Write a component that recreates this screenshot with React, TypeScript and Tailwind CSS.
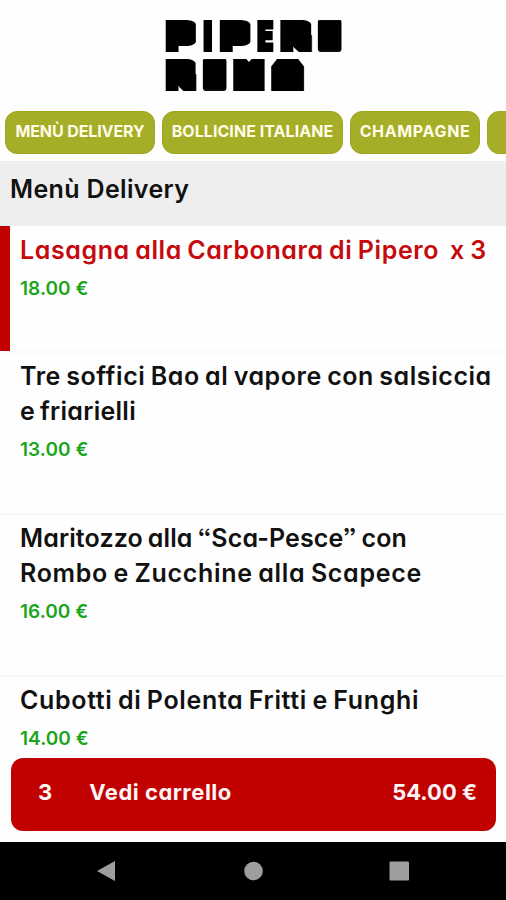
type Dish = {
  lines: { text: string; tracking: string }[];
  price: string;
  quantity?: number;
};

const categories = [
  { label: "MENÙ DELIVERY", style: "w-[150px] tracking-[-0.1px]" },
  { label: "BOLLICINE ITALIANE", style: "w-[181px] tracking-[0.05px]" },
  { label: "CHAMPAGNE", style: "w-[130px] tracking-[0.65px]" },
  { label: "ROSSI", style: "w-[86px]" },
];

const dishes: Dish[] = [
  {
    lines: [{ text: "Lasagna alla Carbonara di Pipero", tracking: "tracking-[0.6px]" }],
    price: "18.00 €",
    quantity: 3,
  },
  {
    lines: [
      { text: "Tre soffici Bao al vapore con salsiccia", tracking: "tracking-[0.56px]" },
      { text: "e friarielli", tracking: "tracking-[0.27px]" },
    ],
    price: "13.00 €",
  },
  {
    lines: [
      { text: "Maritozzo alla “Sca-Pesce” con", tracking: "tracking-[0.12px]" },
      { text: "Rombo e Zucchine alla Scapece", tracking: "tracking-[0.7px]" },
    ],
    price: "16.00 €",
  },
  {
    lines: [{ text: "Cubotti di Polenta Fritti e Funghi", tracking: "tracking-[0.65px]" }],
    price: "14.00 €",
  },
];

const CAP_HEIGHT = 0.727;
const BLOCK_HEIGHT = 32;

// Each letter is thickened by rx/ry until it fills its own block
const logoLetters = [
  { char: "P", x: 0.5, y: 0, width: 32, rx: 4, ry: 8, weight: 500 },
  { char: "I", x: 39, y: 0, width: 9.5, rx: 3, ry: 7, weight: 800 },
  { char: "P", x: 54.5, y: 0, width: 32.5, rx: 4, ry: 8, weight: 500 },
  { char: "E", x: 93, y: 0, width: 16.5, rx: 2, ry: 2, weight: 800 },
  { char: "R", x: 115, y: 0, width: 33, rx: 4, ry: 8, weight: 500 },
  { char: "O", x: 154, y: 0, width: 23.5, rx: 9, ry: 13, weight: 800 },
  { char: "R", x: 0.5, y: 39, width: 32, rx: 4, ry: 8, weight: 500 },
  { char: "O", x: 39, y: 39, width: 23.5, rx: 9, ry: 13, weight: 800 },
  { char: "M", x: 69, y: 39, width: 32.5, rx: 4, ry: 11, weight: 500 },
  { char: "A", x: 107.5, y: 39, width: 32.5, rx: 9, ry: 12, weight: 500 },
];

function Logo() {
  return (
    <svg width="178" height="72" viewBox="0 0 178 72" aria-label="Pipero Roma">
      {logoLetters.map(({ char, x, y, width, rx, ry, weight }, i) => {
        const inner = width - rx * 2;
        return (
          <g key={i}>
            <filter
              id={`block-${i}`}
              filterUnits="userSpaceOnUse"
              x={x - 1}
              y={y}
              width={width + 2}
              height={BLOCK_HEIGHT + 1}
            >
              <feMorphology operator="dilate" radius={`${rx} ${ry}`} />
            </filter>
            <g filter={`url(#block-${i})`}>
              <text
                x={x + rx - inner * 0.09}
                y={y + BLOCK_HEIGHT - ry}
                textLength={inner * 1.16}
                lengthAdjust="spacingAndGlyphs"
                fontWeight={weight}
                fontSize={(BLOCK_HEIGHT - ry * 2) / CAP_HEIGHT}
              >
                {char}
              </text>
            </g>
          </g>
        );
      })}
    </svg>
  );
}

function DishRow({ dish }: { dish: Dish }) {
  const selected = dish.quantity !== undefined;

  return (
    <li
      className={
        selected
          ? "h-[125px] shrink-0 border-l-[10px] border-[#c10000] pl-2.5 pt-[7px] text-[#c40a0c]"
          : "shrink-0 border-t-2 border-[#f9f9f9] pb-12 pl-5 pt-1.5 text-[#111]"
      }
    >
      <h3 className="text-[25px] font-[570] leading-[35px] [word-spacing:-1.5px]">
        {dish.lines.map((line) => (
          <span key={line.text} className={`block whitespace-pre ${line.tracking}`}>
            {line.text}
            {selected && `  x ${dish.quantity}`}
          </span>
        ))}
      </h3>
      <p className="mt-1.5 text-[19px] font-[570] leading-[30px] tracking-[0.05px] text-[#1ba51b]">
        {dish.price}
      </p>
    </li>
  );
}

export default function App() {
  return (
    <div className="flex h-[900px] w-[506px] flex-col overflow-hidden bg-[#fefefe] font-['Inter',sans-serif] [font-feature-settings:'cv11','ss03']">
      <header className="flex h-[111px] shrink-0 justify-center pt-5">
        <Logo />
      </header>

      <nav className="flex h-[50px] shrink-0 gap-[7px] overflow-hidden pl-[5px]">
        {categories.map((category) => (
          <button
            key={category.label}
            className={`h-[43px] shrink-0 whitespace-nowrap rounded-[12px] border border-[#9da51f] bg-[#a6ae27] pb-[3px] text-[16px] font-[650] text-[#fffce8] ${category.style}`}
          >
            {category.label}
          </button>
        ))}
      </nav>

      <h2 className="h-[65px] shrink-0 bg-[#eee] pl-2.5 pt-2.5 text-[25px] font-[570] leading-9 tracking-[0.35px] text-[#111]">
        Menù Delivery
      </h2>

      <main className="relative flex min-h-0 flex-1 flex-col">
        <ul className="flex min-h-0 flex-1 flex-col overflow-hidden">
          {dishes.map((dish) => (
            <DishRow key={dish.price} dish={dish} />
          ))}
        </ul>
        <button className="absolute bottom-[11px] left-[11px] right-2.5 flex h-[73px] items-center rounded-[12px] bg-[#c10000] pb-1 pl-[27px] pr-[19px] text-[22px] font-[650] text-[#fff5f5]">
          <span>3</span>
          <span className="ml-[37px] tracking-[0.5px]">Vedi carrello</span>
          <span className="ml-auto">54.00 €</span>
        </button>
      </main>

      <footer className="flex h-[58px] shrink-0 items-center bg-black">
        <svg width="506" height="58" viewBox="0 0 506 58" fill="#9e9e9e">
          <path d="M97 29 115 19V39Z" />
          <circle cx="253.5" cy="29" r="9.3" />
          <rect x="389.5" y="19.5" width="19.5" height="19" rx="1" />
        </svg>
      </footer>
    </div>
  );
}
